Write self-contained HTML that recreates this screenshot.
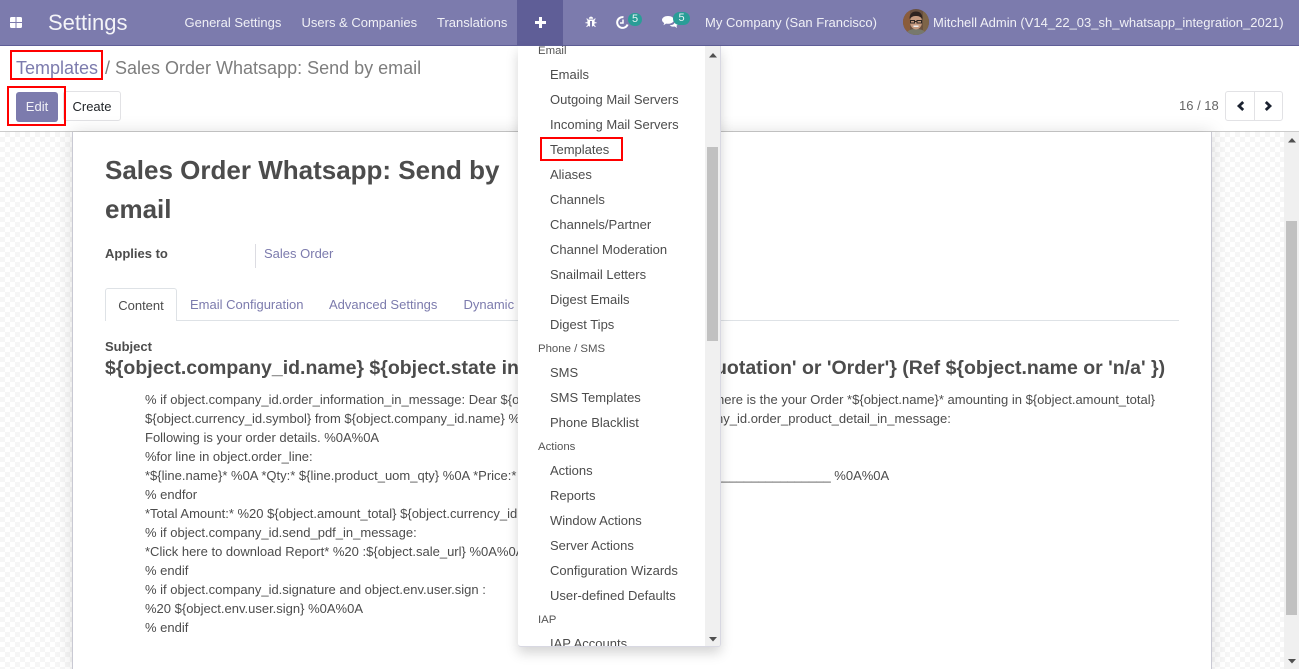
<!DOCTYPE html>
<html lang="en">
<head>
<meta charset="utf-8">
<title>Settings</title>
<style>
*{box-sizing:border-box}
html,body{margin:0;padding:0;width:1299px;height:669px;overflow:hidden;background:#fff;font-family:"Liberation Sans",sans-serif;font-size:13px;color:#4c4c4c}
.a{position:absolute;white-space:nowrap}
#nav{left:0;top:0;width:1299px;height:46px;background:#7c7bad;border-bottom:1px solid #5f5e97;color:#fff}
#nav .t{position:absolute;top:0;line-height:45px;white-space:nowrap;color:#f0f0f6}
.badge{position:absolute;height:13px;border-radius:7px;background:#2a9d97;color:#e8f4f4;font-size:11px;line-height:13px;text-align:center}
.red{position:absolute;border:2px solid #f00;background:transparent}
.bg{left:0;top:132px;width:1284px;height:537px;background-color:#fff;background-image:linear-gradient(45deg,#f6f6f6 25%,transparent 25%,transparent 75%,#f6f6f6 75%),linear-gradient(45deg,#f6f6f6 25%,transparent 25%,transparent 75%,#f6f6f6 75%);background-size:10px 10px;background-position:0 0,5px 5px}
.sheet{left:72px;top:132px;width:1140px;height:537px;background:#fff;border-left:1px solid #c9c9d3;border-right:1px solid #c9c9d3;box-shadow:0 0 16px rgba(0,0,0,.13)}
.body{left:145px;line-height:19px;height:19px}
.mi{position:absolute;left:32px;white-space:nowrap;line-height:25px;height:25px;color:#4c4c4c}
.mh{position:absolute;left:20px;white-space:nowrap;font-size:11.4px;line-height:16px;color:#555}
</style>
</head>
<body>
<div class="a" id="nav">
  <svg style="position:absolute;left:10px;top:17px" width="12" height="11" viewBox="0 0 12 11"><path fill="#fff" d="M0 1.500A1.500 1.500 0 0 1 1.500 0h4v5H0zM6.500 0h4A1.500 1.500 0 0 1 12 1.500V5H6.500zM0 6h5.500v5h-4A1.500 1.500 0 0 1 0 9.500zM6.500 6H12v3.500a1.500 1.500 0 0 1-1.500 1.500h-4z"/></svg>
  <div class="t" style="left:48px;font-size:22px;color:#f4f4f8;line-height:45px">Settings</div>
  <div class="t" style="left:184.500px">General Settings</div>
  <div class="t" style="left:301.500px">Users &amp; Companies</div>
  <div class="t" style="left:437px">Translations</div>
  <div style="position:absolute;left:517px;top:0;width:46px;height:45px;background:#5f5e97"></div>
  <svg style="position:absolute;left:535px;top:17px" width="11" height="11" viewBox="0 0 11 11"><path fill="#fff" d="M4 0h3v4h4v3H7v4H4V7H0V4h4z"/></svg>
  <svg style="position:absolute;left:585px;top:16px" width="12" height="12" viewBox="0 0 12 12"><path fill="#fff" d="M3.800 2.800a2.200 2.200 0 0 1 4.400 0zM3 3.500h6l.9-1.300.8.500-1.100 1.700v1.800h1.900v1h-1.900c0 .6-.1 1.200-.4 1.700l1.600 1.500-.7.700-1.500-1.400c-.5.500-1 .7-1.600.8V5H5v5.500c-.6-.1-1.100-.3-1.600-.8L1.900 11.100l-.7-.7 1.600-1.500C2.500 8.400 2.400 7.800 2.400 7.200H.5v-1h1.900V4.400L1.300 2.700l.8-.5z"/></svg>
  <svg style="position:absolute;left:616px;top:16px" width="13" height="13" viewBox="0 0 13 13"><path fill="none" stroke="#fff" stroke-width="2" d="M11.600 8.500A5.400 5.400 0 1 1 7.500 1.200"/><path fill="none" stroke="#fff" stroke-width="1.500" d="M7 3.500V7H4"/></svg>
  <div class="badge" style="left:628px;top:13px;width:14px">5</div>
  <svg style="position:absolute;left:662px;top:16px" width="16" height="13" viewBox="0 0 16 13"><path fill="#fff" d="M6 0c3.300 0 6 1.700 6 3.900S9.300 7.800 6 7.800c-.7 0-1.300-.1-1.900-.2L1.500 9.300l.7-2.300C.8 6.200 0 5.100 0 3.900 0 1.700 2.700 0 6 0zM13 4.500c1.800.5 3 1.500 3 2.900 0 1-.6 1.800-1.500 2.400l.5 2.200-2.300-1.500c-1.800.4-3.900-.1-5-1.300 3 .1 5.500-1.300 5.300-4.700z"/></svg>
  <div class="badge" style="left:673px;top:12px;width:17px">5</div>
  <div class="t" style="left:705px">My Company (San Francisco)</div>
  <svg style="position:absolute;left:903px;top:9px" width="26" height="26" viewBox="0 0 26 26"><defs><clipPath id="c"><circle cx="13" cy="13" r="13"/></clipPath></defs><g clip-path="url(#c)"><rect width="26" height="26" fill="#6a5140"/><rect x="0" y="0" width="7" height="26" fill="#8a5c3c"/><rect x="20" y="0" width="6" height="26" fill="#7d6448"/><path fill="#77786c" d="M3 26c1-5 5-6 10-6s9 1 10 6z"/><ellipse cx="13" cy="13" rx="6" ry="7.500" fill="#c69b80"/><path fill="#2f2420" d="M6.500 10c0-5.500 3-7.500 6.500-7.500s6.500 2 6.500 7.500c-2-2.500-4-3-6.500-3s-4.500.5-6.500 3z"/><path fill="none" stroke="#2c2622" stroke-width="1" d="M7.500 11.500h4v2.500h-4zM14 11.500h4.500v2.500H14zM11.500 12.500H14"/><path fill="#eee" d="M10.500 16.500h5V18h-5z"/></g></svg>
  <div class="t" style="left:933px">Mitchell Admin (V14_22_03_sh_whatsapp_integration_2021)</div>
</div>

<div class="a" style="left:0;top:46px;width:1299px;height:86px;background:#fff;border-bottom:1px solid #ccc"></div>
<div class="a" style="left:16px;top:56px;font-size:18px;line-height:24px;color:#7c7bad">Templates</div>
<div class="a" style="left:105px;top:56px;font-size:18px;line-height:24px;color:#7d7d7d">/ Sales Order Whatsapp: Send by email</div>
<div class="red" style="left:10px;top:50px;width:93px;height:30px"></div>
<div class="a" style="left:16px;top:92px;width:42px;height:30px;background:#7c7bad;border-radius:3px;color:#f2f2f7;line-height:30px;text-align:center">Edit</div>
<div class="a" style="left:63px;top:91px;width:58px;height:30px;background:#fff;border:1px solid #e2e2e5;border-radius:3px;color:#212529;line-height:29px;text-align:center">Create</div>
<div class="red" style="left:7px;top:86px;width:59px;height:40px"></div>
<div class="a" style="left:1179px;top:97px;line-height:18px;color:#666">16 / 18</div>
<div class="a" style="left:1225px;top:91px;width:58px;height:30px;background:#fff;border:1px solid #e2e2e5;border-radius:3px"></div>
<div class="a" style="left:1254px;top:92px;width:1px;height:28px;background:#e2e2e5"></div>
<svg class="a" style="left:1236px;top:100px" width="10" height="12" viewBox="0 0 10 12"><path fill="none" stroke="#1b2230" stroke-width="2.800" d="M7.200 2 3 6l4.200 4"/></svg>
<svg class="a" style="left:1263px;top:100px" width="10" height="12" viewBox="0 0 10 12"><path fill="none" stroke="#1b2230" stroke-width="2.800" d="M2.800 2 7 6l-4.200 4"/></svg>

<div class="a bg"></div>
<div class="a sheet"></div>

<div class="a" style="left:105px;top:151px;font-size:26px;font-weight:bold;line-height:39px;color:#4c4c4c">Sales Order Whatsapp: Send by</div>
<div class="a" style="left:105px;top:190px;font-size:26px;font-weight:bold;line-height:39px;color:#4c4c4c">email</div>
<div class="a" style="left:105px;top:245px;font-weight:bold;line-height:18px">Applies to</div>
<div class="a" style="left:255px;top:244px;width:1px;height:24px;background:#dcdce2"></div>
<div class="a" style="left:264px;top:245px;line-height:18px;color:#7c7bad">Sales Order</div>

<div class="a" style="left:105px;top:320px;width:1074px;height:1px;background:#dee2e6"></div>
<div class="a" style="left:105px;top:288px;width:72px;height:33px;background:#fff;border:1px solid #dee2e6;border-bottom:0;border-radius:3px 3px 0 0;line-height:33px;text-align:center;color:#4c4c4c">Content</div>
<div class="a" style="left:190px;top:296px;line-height:18px;color:#7c7bad">Email Configuration</div>
<div class="a" style="left:329px;top:296px;line-height:18px;color:#7c7bad">Advanced Settings</div>
<div class="a" style="left:463.500px;top:296px;line-height:18px;color:#7c7bad">Dynamic Placeholder Generator</div>

<div class="a" style="left:105px;top:338px;font-weight:bold;line-height:18px">Subject</div>
<div class="a" style="left:105px;top:355px;font-size:19.500px;font-weight:bold;line-height:26px">${object.company_id.name} ${object.state in</div>
<div class="a" style="left:715px;top:355px;font-size:19.500px;font-weight:bold;line-height:26px">uotation' or 'Order'} (Ref ${object.name or 'n/a' })</div>

<div class="a body" style="top:390px">% if object.company_id.order_information_in_message: Dear ${object.partner_id.name}</div>
<div class="a body" style="top:390px;left:717px">here is the your Order *${object.name}* amounting in ${object.amount_total}</div>
<div class="a body" style="top:409px">${object.currency_id.symbol} from ${object.company_id.name} %0A%0A % endif</div>
<div class="a body" style="top:409px;left:716px">ny_id.order_product_detail_in_message:</div>
<div class="a body" style="top:428px">Following is your order details. %0A%0A</div>
<div class="a body" style="top:447px">%for line in object.order_line:</div>
<div class="a body" style="top:466px">*${line.name}* %0A *Qty:* ${line.product_uom_qty} %0A *Price:* ${line.price_unit}</div>
<div class="a body" style="top:466px;left:715px">________________ %0A%0A</div>
<div class="a body" style="top:485px">% endfor</div>
<div class="a body" style="top:504px">*Total Amount:* %20 ${object.amount_total} ${object.currency_id.symbol}</div>
<div class="a body" style="top:523px">% if object.company_id.send_pdf_in_message:</div>
<div class="a body" style="top:542px">*Click here to download Report* %20 :${object.sale_url} %0A%0A</div>
<div class="a body" style="top:561px">% endif</div>
<div class="a body" style="top:580px">% if object.company_id.signature and object.env.user.sign :</div>
<div class="a body" style="top:599px">%20 ${object.env.user.sign} %0A%0A</div>
<div class="a body" style="top:618px">% endif</div>

<!-- page scrollbar -->
<div class="a" style="left:1284px;top:132px;width:15px;height:537px;background:#f0f0f0"></div>
<div class="a" style="left:1286px;top:221px;width:11px;height:394px;background:#c1c1c1"></div>
<svg class="a" style="left:1288px;top:138px" width="8" height="5" viewBox="0 0 8 5"><path fill="#505050" d="M4 0l4 4.500H0z"/></svg>
<svg class="a" style="left:1288px;top:659px" width="8" height="5" viewBox="0 0 8 5"><path fill="#505050" d="M0 0h8L4 4.500z"/></svg>

<!-- dropdown -->
<div class="a" style="left:518px;top:46px;width:203px;height:601px;background:#fff;border-right:1px solid #d8d8e2;border-bottom:1px solid #d8d8e2;box-shadow:0 6px 12px rgba(0,0,0,.17);overflow:hidden;border-radius:0 0 3px 3px">
  <div class="mh" style="top:-3px">Email</div>
  <div class="mi" style="top:16px">Emails</div>
  <div class="mi" style="top:41px">Outgoing Mail Servers</div>
  <div class="mi" style="top:66px">Incoming Mail Servers</div>
  <div class="mi" style="top:91px">Templates</div>
  <div class="mi" style="top:116px">Aliases</div>
  <div class="mi" style="top:141px">Channels</div>
  <div class="mi" style="top:166px">Channels/Partner</div>
  <div class="mi" style="top:191px">Channel Moderation</div>
  <div class="mi" style="top:216px">Snailmail Letters</div>
  <div class="mi" style="top:241px">Digest Emails</div>
  <div class="mi" style="top:266px">Digest Tips</div>
  <div class="mh" style="top:295px">Phone / SMS</div>
  <div class="mi" style="top:314px">SMS</div>
  <div class="mi" style="top:339px">SMS Templates</div>
  <div class="mi" style="top:364px">Phone Blacklist</div>
  <div class="mh" style="top:393px">Actions</div>
  <div class="mi" style="top:412px">Actions</div>
  <div class="mi" style="top:437px">Reports</div>
  <div class="mi" style="top:462px">Window Actions</div>
  <div class="mi" style="top:487px">Server Actions</div>
  <div class="mi" style="top:512px">Configuration Wizards</div>
  <div class="mi" style="top:537px">User-defined Defaults</div>
  <div class="mh" style="top:566px">IAP</div>
  <div class="mi" style="top:585px">IAP Accounts</div>
  <div style="position:absolute;left:187px;top:0;width:15px;height:601px;background:#f0f0f0"></div>
  <div style="position:absolute;left:189px;top:101px;width:11px;height:194px;background:#c1c1c1"></div>
  <svg style="position:absolute;left:191px;top:7px" width="8" height="5" viewBox="0 0 8 5"><path fill="#505050" d="M4 0l4 4.500H0z"/></svg>
  <svg style="position:absolute;left:191px;top:591px" width="8" height="5" viewBox="0 0 8 5"><path fill="#505050" d="M0 0h8L4 4.500z"/></svg>
</div>
<div class="red" style="left:540px;top:137px;width:83px;height:24px"></div>
</body>
</html>
